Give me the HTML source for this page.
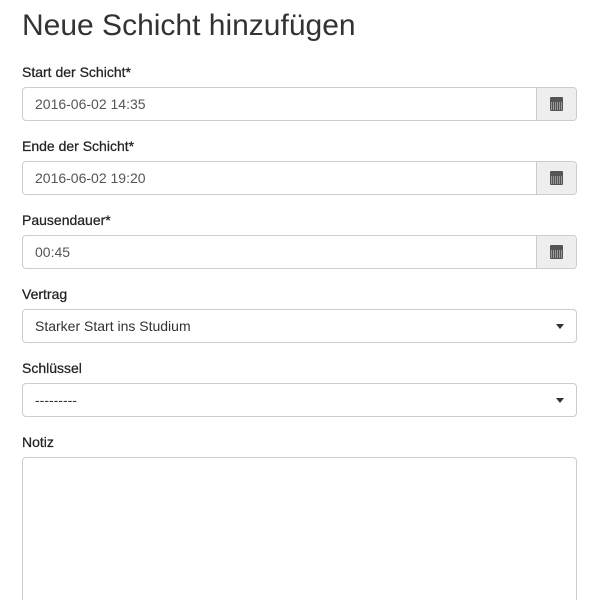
<!DOCTYPE html>
<html><head><style>
html,body{margin:0;width:600px;height:600px;overflow:hidden;background:#fff}
body{font-family:"Liberation Sans",sans-serif;color:#333;position:relative}
h1{position:absolute;left:22px;top:6px;margin:0;font-size:30px;font-weight:normal;line-height:40px}
.l{position:absolute;left:22px;font-size:14px;line-height:20px;color:#222;-webkit-text-stroke:0.25px #222}
.i{position:absolute;left:22px;width:553px;height:32px;border:1px solid #ccc;border-radius:4px;font-size:14px;line-height:32px;box-sizing:content-box}
.i span{position:absolute;left:12px;top:0;color:#555}
.a{position:absolute;right:0;top:0;width:39px;height:32px;background:#eee;border-left:1px solid #ccc;border-radius:0 4px 4px 0}
.cal{position:absolute;left:13px;top:9px;width:13px;height:14px;background:#555;border-radius:1px}
.cal:before{content:"";position:absolute;left:1px;top:5px;width:11px;height:8px;background:repeating-linear-gradient(90deg,#999 0 1px,#555 1px 2px)}
.car{position:absolute;right:12px;top:14px;border-left:4px solid transparent;border-right:4px solid transparent;border-top:5px solid #333}
</style></head><body>
<h1>Neue Schicht hinzufügen</h1>
<div class="l" style="top:62px">Start der Schicht*</div>
<div class="i" style="top:87px"><span>2016-06-02 14:35</span><div class="a"><div class="cal"></div></div></div>
<div class="l" style="top:136px">Ende der Schicht*</div>
<div class="i" style="top:161px"><span>2016-06-02 19:20</span><div class="a"><div class="cal"></div></div></div>
<div class="l" style="top:210px">Pausendauer*</div>
<div class="i" style="top:235px"><span>00:45</span><div class="a"><div class="cal"></div></div></div>
<div class="l" style="top:284px">Vertrag</div>
<div class="i" style="top:309px"><span style="color:#333">Starker Start ins Studium</span><div class="car"></div></div>
<div class="l" style="top:358px">Schlüssel</div>
<div class="i" style="top:383px"><span style="color:#333">---------</span><div class="car"></div></div>
<div class="l" style="top:432px">Notiz</div>
<div class="i" style="top:457px;height:160px"></div>
</body></html>
